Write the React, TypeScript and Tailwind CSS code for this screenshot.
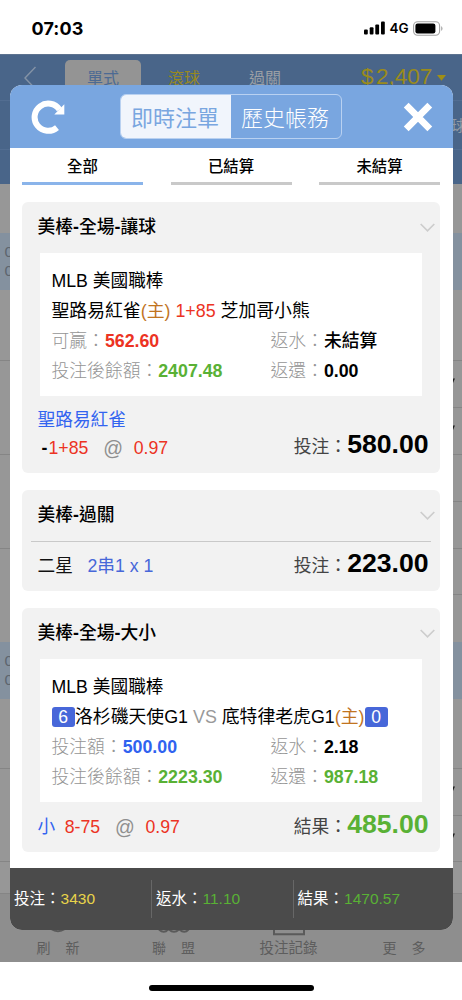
import type { ReactNode } from "react";

const cx = (...c: (string | false | undefined)[]) => c.filter(Boolean).join(" ");

function StatusBar() {
  return (
    <div className="flex h-[53.5px] items-center justify-between bg-white pt-[3px] pr-[19px] pl-[31.5px]">
      <span className="text-[18px] font-bold tracking-[0.1px] text-black font-['Inter',sans-serif]">07:03</span>
      <div className="flex items-center">
        <svg width="21" height="14" viewBox="0 0 21 14" className="mr-[5px]">
          <rect x="0" y="8.6" width="3.8" height="5" rx="1" />
          <rect x="5.7" y="6.3" width="3.8" height="7.3" rx="1" />
          <rect x="11.3" y="3.5" width="3.8" height="10.1" rx="1" />
          <rect x="17" y="0.6" width="3.8" height="13" rx="1" />
        </svg>
        <span className="mr-[5px] w-[18.5px] text-[13.5px] font-semibold text-black font-['Inter',sans-serif]">4G</span>
        <svg width="30" height="15" viewBox="0 0 30 15">
          <rect x="0.6" y="0.8" width="26" height="13.4" rx="4" fill="none" stroke="#a3a3a3" strokeWidth="1.1" />
          <rect x="2.4" y="2.6" width="20" height="9.8" rx="2.2" />
          <path d="M28.2 5.2c1.7.6 1.7 4 0 4.6z" fill="#a3a3a3" />
        </svg>
      </div>
    </div>
  );
}

type BackRow = { h: string; blue?: boolean; left?: boolean; right?: boolean; arrow?: boolean };

const backRows: BackRow[] = [
  { h: "h-[49px]" },
  { h: "h-[57px]", blue: true },
  { h: "h-[70.5px]", left: true, right: true },
  { h: "h-[47px]", right: true, arrow: true },
  { h: "h-[47px]", left: true, right: true, arrow: true },
  { h: "h-[47px]", right: true },
  { h: "h-[47px]", left: true, right: true },
  { h: "h-[46.5px]", right: true },
  { h: "h-[47px]" },
  { h: "h-[57px]", blue: true },
  { h: "h-[69.5px]", left: true, right: true },
  { h: "h-[47px]", right: true, arrow: true },
  { h: "h-[46.5px]", left: true, right: true, arrow: true },
  { h: "h-[32px]", left: true, right: true },
];

function OddsPage() {
  return (
    <div className="flex h-[908.5px] flex-col overflow-hidden bg-[#979797]">
      <div className="h-[130.5px] shrink-0 border-t border-[#5d7390] bg-[#496589]">
        <div className="flex h-[46.5px] items-start border-b border-[#526d91]">
          <svg width="14" height="24" viewBox="0 0 14 24" className="mt-[11px] ml-[23px] shrink-0">
            <path d="M12.5 1L2 12l10.500 11" fill="none" stroke="#8493a6" strokeWidth="1.4" />
          </svg>
          <div className="mt-[5.5px] ml-7 flex h-[34px] w-[76px] shrink-0 items-center justify-center rounded-t-[5px] bg-[#949494] text-[16px] text-[#4c6a93]">單式</div>
          <div className="mt-[5.5px] ml-[27px] flex h-[34px] w-8 shrink-0 items-center text-[16px] text-[#98891f]">滾球</div>
          <div className="mt-[5.5px] ml-[49px] flex h-[34px] w-8 shrink-0 items-center text-[16px] text-[#9a9fa5]">過關</div>
          <div className="mt-2 ml-[80px] flex items-baseline text-[22.500px] leading-7 text-[#9a8b1b] font-['Liberation_Sans',sans-serif]">
            <span className="mr-[2.500px]">$</span>
            <span className="w-[55px]">2,407</span>
            <svg width="9" height="6" viewBox="0 0 9 6" className="mt-[12px] ml-1.5 self-start">
              <path d="M0 0h9L4.500 5.800z" fill="#a08f15" />
            </svg>
          </div>
        </div>
        <div className="flex h-[48.500px] items-center justify-end border-b border-[#526d91]">
          <span className="-mr-1 text-[15px] whitespace-nowrap text-[#919aa4]">球</span>
        </div>
      </div>
      {backRows.map((r, i) => (
        <div key={i} className={cx("flex shrink-0 justify-between", r.h, r.blue && "bg-[#84919f]")}>
          <div className={cx("w-[16px] pl-[4.500px]", r.left && "border-b border-[#858585]")}>
            {r.blue && (
              <div className="pt-[9px] text-[15.500px] leading-[19px] text-[#5d656e] font-['Liberation_Sans',sans-serif]">
                <div>0</div>
                <div>0</div>
              </div>
            )}
          </div>
          <div className={cx("flex w-[10px] items-start", r.right && "border-b border-[#858585]")}>
            {r.arrow && (
              <svg width="4" height="6" viewBox="0 0 4 6" className="mt-[17px]">
                <path d="M0 0.500h3L0.800 5.500H0z" fill="#222" />
              </svg>
            )}
          </div>
        </div>
      ))}
      <div className="relative flex h-[69px] shrink-0 items-end bg-[#8e8e8e] pb-[5px] text-[14px] text-[#5d5d5d]">
        <svg width="462" height="12" viewBox="0 0 462 12" className="absolute top-[32px] left-0" fill="none" stroke="#5a5a5a" strokeWidth="2">
          <path d="M51 3q7 4.500 14 0M159 3.500q5 4.500 9 0M169 3.500q5 4.500 10 0M179.500 3.500q5 4.500 9 0" />
          <path d="M274 1v7.200h30V1" />
        </svg>
        <span className="w-[116px] text-center whitespace-pre"><span className="mr-[15px]">刷</span>新</span>
        <span className="w-[115px] text-center"><span className="mr-[15px]">聯</span>盟</span>
        <span className="w-[115px] text-center text-[14.500px]">投注記錄</span>
        <span className="w-[116px] text-center"><span className="mr-[15px]">更</span>多</span>
      </div>
    </div>
  );
}

function Tab({ label, active }: { label: string; active?: boolean }) {
  return (
    <div className={cx("flex h-[36.500px] w-[121px] items-center justify-center border-b-[3px] pt-0.5 text-[15.400px] font-medium text-black", active ? "border-[#8ab4ea]" : "border-[#c9c9c9]")}>
      {label}
    </div>
  );
}

function Card({ title, height, children }: { title: string; height: string; children: ReactNode }) {
  return (
    <section className={cx("flex shrink-0 flex-col rounded-[6px] bg-[#f2f2f2]", height)}>
      <div className="flex h-[51px] shrink-0 items-center justify-between pr-[5px] pl-[15.500px]">
        <h2 className="text-[17.750px] font-medium text-black font-['Liberation_Sans','Noto_Sans_CJK_TC',sans-serif]">
          {title.split("-").map((p, i) => (
            <span key={i}>{i > 0 && <b>-</b>}{p}</span>
          ))}
        </h2>
        <svg width="15" height="9" viewBox="0 0 15 9" fill="none" stroke="#cdcdcd" strokeWidth="1.700">
          <path d="M0.700 1l6.800 6.800L14.300 1" />
        </svg>
      </div>
      {children}
    </section>
  );
}

function Cell({ label, value, color }: { label: string; value: string; color: string }) {
  return (
    <div className="flex items-center whitespace-nowrap">
      <span className="text-[#959595] font-light">{label}：</span>
      <b className={color}>{value}</b>
    </div>
  );
}

function Detail({ match, cells }: { match: ReactNode; cells: { label: string; value: string; color: string }[] }) {
  return (
    <div className="mx-[18px] flex h-[143px] shrink-0 flex-col bg-white pt-[12.500px] pl-[11.500px] text-[17.850px] leading-[30.200px] text-black">
      <div className="text-[17.700px]">MLB 美國職棒</div>
      <div className="flex items-center whitespace-pre">{match}</div>
      <div className="grid grid-cols-[219px_1fr] text-[17.800px]">
        {cells.map((c) => <Cell key={c.label} {...c} />)}
      </div>
    </div>
  );
}

function Total({ label, value, color }: { label: string; value: string; color: string }) {
  return (
    <div className="flex items-baseline">
      <span className="text-[17.800px] text-[#444]">{label}：</span>
      <b className={cx("text-[26.600px] leading-8", color)}>{value}</b>
    </div>
  );
}

function Score({ children }: { children: ReactNode }) {
  return <span className="flex h-5 w-[23.500px] items-center justify-center rounded-[3px] bg-[#4767d9] text-[17.600px] text-white">{children}</span>;
}

function BetModal() {
  return (
    <div className="absolute top-[85px] left-[9.500px] flex h-[845px] w-[443px] flex-col overflow-hidden rounded-[12px] bg-white">
      <header className="flex h-[63px] shrink-0 items-center bg-[#79a6e0] pl-[21px]">
        <svg width="35" height="36" viewBox="0 0 35 36" fill="none">
          <path d="M26 28.600A13.600 13.600 0 1 1 28.400 10.500" stroke="#fff" strokeWidth="6" />
          <path d="M33.300 5.300v10.300H23.300z" fill="#fff" />
        </svg>
        <div className="ml-[54.500px] flex h-[45px] w-[222px] overflow-hidden rounded-[6px] border border-[#b9d1f1] text-[22px]">
          <div className="flex w-[110px] items-center justify-center bg-[#f1f5fc] pr-0.5 text-[#79a6e0]">即時注單</div>
          <div className="flex flex-1 items-center justify-center pr-0.5 text-white font-light">歷史帳務</div>
        </div>
        <svg width="30" height="30" viewBox="0 0 30 30" stroke="#fff" strokeWidth="6.800" className="ml-[60.500px]">
          <path d="M3.200 3.200l23.600 23.600M26.800 3.200L3.200 26.800" />
        </svg>
      </header>
      <div className="flex shrink-0 justify-between px-[12.500px]">
        <Tab label="全部" active />
        <Tab label="已結算" />
        <Tab label="未結算" />
      </div>
      <main className="flex flex-1 flex-col gap-[17px] px-[12.500px] pt-[17.500px] font-['Liberation_Sans','Noto_Sans_CJK_TC',sans-serif]">
        <Card title="美棒-全場-讓球" height="h-[270.500px]">
          <Detail
            match={<><span>聖路易紅雀</span><span className="text-[#c1741f]">(主)</span><span className="text-[#ec3323]"> 1+85</span><span> 芝加哥小熊</span></>}
            cells={[
              { label: "可贏", value: "562.60", color: "text-[#ec3323]" },
              { label: "返水", value: "未結算", color: "text-black font-medium" },
              { label: "投注後餘額", value: "2407.48", color: "text-[#59b135]" },
              { label: "返還", value: "0.00", color: "text-black" },
            ]}
          />
          <div className="flex flex-1 items-start justify-between pt-[10px] pr-3 pl-[15.500px] text-[17.700px]">
            <div className="leading-7">
              <div className="text-[#3264f0]">聖路易紅雀</div>
              <div className="flex whitespace-pre text-[#ec3323]">
                <b className="ml-1 w-[7px] text-black">-</b><span>1+85</span>
                <span className="ml-[15px] text-[19.500px] text-[#8f8f8f]">@</span>
                <span className="ml-[10.500px]">0.97</span>
              </div>
            </div>
            <div className="mt-[22px] -mr-[0.500px]"><Total label="投注" value="580.00" color="text-black" /></div>
          </div>
        </Card>
        <Card title="美棒-過關" height="h-[101.500px]">
          <div className="mx-[9px] flex flex-1 justify-between border-t border-[#c9c9c9] pt-[5px] pr-[2.500px] pl-[6.500px] text-[17.700px]">
            <div className="flex pt-[6px] text-[#111]">
              <span>二星</span>
              <span className="ml-[14.500px] text-[#4767d9]">2串1 x 1</span>
            </div>
            <Total label="投注" value="223.00" color="text-black" />
          </div>
        </Card>
        <Card title="美棒-全場-大小" height="h-[244px]">
          <Detail
            match={<><Score>6</Score><span>洛杉磯天使G1</span><span className="text-[#999]"> VS </span><span>底特律老虎G1</span><span className="text-[#c1741f]">(主)</span><Score>0</Score></>}
            cells={[
              { label: "投注額", value: "500.00", color: "text-[#2f62f0]" },
              { label: "返水", value: "2.18", color: "text-black" },
              { label: "投注後餘額", value: "2223.30", color: "text-[#59b135]" },
              { label: "返還", value: "987.18", color: "text-[#59b135]" },
            ]}
          />
          <div className="flex flex-1 items-start justify-between pt-1.5 pr-[11.500px] pl-[15.500px] text-[17.700px]">
            <div className="mt-[5px] flex leading-7 text-[#ec3323]">
              <span className="text-[#3264f0]">小</span>
              <span className="ml-[9.500px]">8-75</span>
              <span className="ml-[15px] text-[19.500px] text-[#8f8f8f]">@</span>
              <span className="ml-[10.500px]">0.97</span>
            </div>
            <Total label="結果" value="485.00" color="text-[#59b135]" />
          </div>
        </Card>
      </main>
      <footer className="flex h-[62px] shrink-0 items-center bg-[#4b4b4b] text-[15.500px] text-white font-['Liberation_Sans','Noto_Sans_CJK_TC',sans-serif]">
        <div className="flex h-[38px] w-[142.500px] items-center border-r border-[#676767] pl-[4.500px]">投注：<span className="text-[#e8d44a]">3430</span></div>
        <div className="flex h-[38px] w-[141.500px] items-center border-r border-[#676767] pl-[4px]">返水：<span className="text-[#59b135]">11.10</span></div>
        <div className="flex h-[38px] items-center pl-[4px]">結果：<span className="text-[#59b135]">1470.57</span></div>
      </footer>
    </div>
  );
}

export default function App() {
  return (
    <div lang="zh-Hant" className="relative flex h-[1000px] w-[462px] flex-col overflow-hidden bg-white font-['Noto_Sans_CJK_TC',sans-serif]">
      <StatusBar />
      <OddsPage />
      <div className="flex flex-1 items-end justify-center pb-[9px]">
        <div className="h-1.5 w-[165px] rounded-full bg-black" />
      </div>
      <BetModal />
    </div>
  );
}
